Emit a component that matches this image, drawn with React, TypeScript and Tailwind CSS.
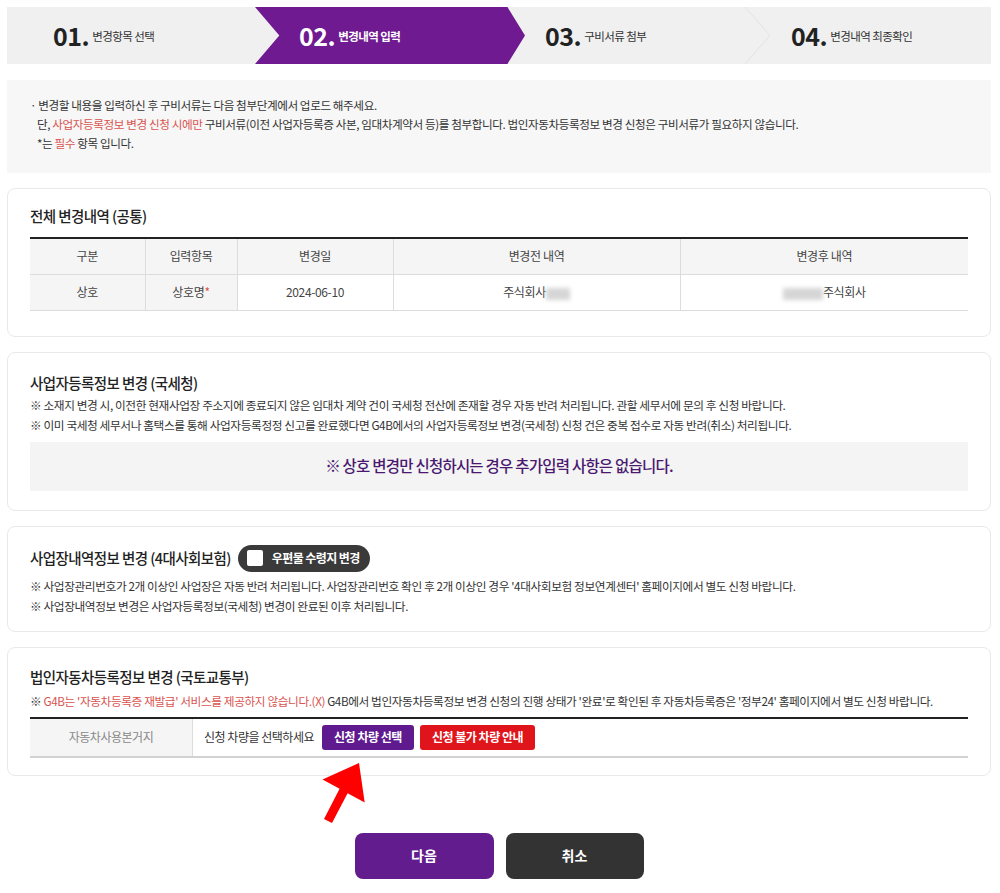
import React from 'react';

const steps = [
  { no: '01.', label: '변경항목 선택' },
  { no: '02.', label: '변경내역 입력' },
  { no: '03.', label: '구비서류 첨부' },
  { no: '04.', label: '변경내역 최종확인' },
];

function Stepper() {
  return (
    <div className="relative flex h-[57px] bg-[#f0f0f0]">
      {/* active chevron */}
      <div className="absolute left-[248px] top-0 h-full w-[270px] bg-[#6f1a91] [clip-path:polygon(0_0,93.5%_0,100%_50%,93.5%_100%,0_100%,9%_50%)]" />
      {/* faint divider between 03 and 04 */}
      <svg className="absolute left-[737px] top-0" width="28" height="57" viewBox="0 0 28 57">
        <polyline points="1,0 26,28.5 1,57" fill="none" stroke="#e2e2e2" strokeWidth="1" />
      </svg>
      {steps.map((s, i) => (
        <div key={s.no} className="relative flex flex-1 items-center pl-[46px]">
          <span className={`text-[25px] font-bold leading-none tracking-[-0.02em] ${i === 1 ? 'text-white' : 'text-[#222]'}`}>{s.no}</span>
          <span className={`ml-[3px] mt-[3px] text-[11.5px] tracking-[-0.05em] ${i === 1 ? 'font-bold text-white' : 'text-[#333]'}`}>{s.label}</span>
        </div>
      ))}
    </div>
  );
}

function Card({ children, className = '' }: { children: React.ReactNode; className?: string }) {
  return <div className={`rounded-lg border border-[#e9e9e9] bg-white px-[22px] ${className}`}>{children}</div>;
}

function Title({ children }: { children: React.ReactNode }) {
  return <div className="text-[14.5px] font-medium leading-[20px] tracking-[-0.04em] text-[#222]">{children}</div>;
}

function Note({ children }: { children: React.ReactNode }) {
  return <p className="text-[11.7px] leading-[20px] tracking-[-0.035em] text-[#333]">{children}</p>;
}

const Blur = ({ w }: { w: string }) => (
  <span className={`inline-block h-[12px] align-middle blur-[2px] bg-[#d6d6d6] ${w}`} />
);

export default function App() {
  const th = 'border-l border-[#dcdcdc] first:border-l-0 bg-[#f5f5f5] font-normal';
  const td = 'border-l border-[#dcdcdc] first:border-l-0';
  return (
    <div className="min-h-[893px] bg-white font-['Noto_Sans_CJK_KR','Noto_Sans',sans-serif] text-[#333]">
      <div className="relative ml-[7px] w-[984px] pt-[7px]">
        <Stepper />

        <div className="mt-[16px] bg-[#f7f7f7] px-[23px] pb-[20px] pt-[16px] text-[11.6px] leading-[19px] tracking-[-0.035em] text-[#333]">
          <p>· 변경할 내용을 입력하신 후 구비서류는 다음 첨부단계에서 업로드 해주세요.</p>
          <p className="pl-[7px]">
            단, <span className="text-[#d9534f]">사업자등록정보 변경 신청 시에만</span> 구비서류(이전 사업자등록증 사본, 임대차계약서 등)를 첨부합니다. 법인자동차등록정보 변경 신청은 구비서류가 필요하지 않습니다.
          </p>
          <p className="pl-[7px]">
            *는 <span className="text-[#d9534f]">필수</span> 항목 입니다.
          </p>
        </div>

        <div className="mt-[15px] flex flex-col gap-[15px]">
          <Card className="pb-[25px] pt-[17px]">
            <Title>전체 변경내역 (공통)</Title>
            <table className="mt-[11px] w-full border-collapse border-t-2 border-[#222] text-center text-[12px] tracking-[-0.03em] text-[#444]">
              <colgroup>
                <col className="w-[115px]" />
                <col className="w-[92px]" />
                <col className="w-[156px]" />
                <col className="w-[287px]" />
                <col />
              </colgroup>
              <thead>
                <tr className="h-[36px] border-b border-[#dcdcdc]">
                  <th className={th}>구분</th>
                  <th className={th}>입력항목</th>
                  <th className={th}>변경일</th>
                  <th className={th}>변경전 내역</th>
                  <th className={th}>변경후 내역</th>
                </tr>
              </thead>
              <tbody>
                <tr className="h-[36px] border-b border-[#dcdcdc]">
                  <td className={`${td} bg-[#f5f5f5]`}>상호</td>
                  <td className={`${td} bg-[#f5f5f5]`}>
                    상호명<span className="text-[#d9534f]">*</span>
                  </td>
                  <td className={td}>2024-06-10</td>
                  <td className={td}>
                    주식회사<Blur w="w-[24px]" />
                  </td>
                  <td className={td}>
                    <Blur w="w-[40px]" />주식회사
                  </td>
                </tr>
              </tbody>
            </table>
          </Card>

          <Card className="pb-[19px] pt-[20px]">
            <Title>사업자등록정보 변경 (국세청)</Title>
            <div className="mt-[2px]">
              <Note>※ 소재지 변경 시, 이전한 현재사업장 주소지에 종료되지 않은 임대차 계약 건이 국세청 전산에 존재할 경우 자동 반려 처리됩니다. 관할 세무서에 문의 후 신청 바랍니다.</Note>
              <Note>※ 이미 국세청 세무서나 홈택스를 통해 사업자등록정정 신고를 완료했다면 G4B에서의 사업자등록정보 변경(국세청) 신청 건은 중복 접수로 자동 반려(취소) 처리됩니다.</Note>
            </div>
            <div className="mt-[7px] flex h-[49px] items-center justify-center bg-[#f4f4f4] text-[15.5px] font-medium tracking-[-0.05em] text-[#4a1870]">
              ※ 상호 변경만 신청하시는 경우 추가입력 사항은 없습니다.
            </div>
          </Card>

          <Card className="pb-[15px] pt-[18px]">
            <div className="flex items-center gap-[7px]">
              <Title>사업장내역정보 변경 (4대사회보험)</Title>
              <button className="flex h-[27px] items-center gap-[9px] rounded-full bg-[#3a3a3a] pl-[9px] pr-[10px] text-[12px] font-bold tracking-[-0.05em] text-white">
                <span className="h-[16px] w-[16px] rounded-[2px] bg-white" />
                우편물 수령지 변경
              </button>
            </div>
            <div className="mt-[4px]">
              <Note>※ 사업장관리번호가 2개 이상인 사업장은 자동 반려 처리됩니다. 사업장관리번호 확인 후 2개 이상인 경우 '4대사회보험 정보연계센터' 홈페이지에서 별도 신청 바랍니다.</Note>
              <Note>※ 사업장내역정보 변경은 사업자등록정보(국세청) 변경이 완료된 이후 처리됩니다.</Note>
            </div>
          </Card>

          <Card className="pb-[17px] pt-[19px]">
            <Title>법인자동차등록정보 변경 (국토교통부)</Title>
            <div className="mt-[4px]">
              <Note>
                ※ <span className="text-[#d9534f]">G4B는 '자동차등록증 재발급' 서비스를 제공하지 않습니다.(X)</span> G4B에서 법인자동차등록정보 변경 신청의 진행 상태가 '완료'로 확인된 후 자동차등록증은 '정부24' 홈페이지에서 별도 신청 바랍니다.
              </Note>
            </div>
            <div className="mt-[6px] flex h-[41px] border-b-2 border-t-2 border-b-[#d2d2d2] border-t-[#222] text-[12px] tracking-[-0.04em]">
              <div className="flex w-[163px] items-center justify-center border-r border-[#dcdcdc] bg-[#f5f5f5] text-[#888]">자동차사용본거지</div>
              <div className="flex items-center pl-[11px] text-[#333]">
                신청 차량을 선택하세요
                <button className="ml-[8px] h-[25px] rounded-[3px] bg-[#5e1a8e] px-[12px] font-bold text-white">신청 차량 선택</button>
                <button className="ml-[6px] h-[25px] rounded-[3px] bg-[#e0141b] px-[12px] font-bold text-white">신청 불가 차량 안내</button>
              </div>
            </div>
          </Card>
        </div>

        <div className="mt-[57px] flex justify-center gap-[12px]">
          <button className="h-[46px] w-[139px] rounded-lg bg-[#621c8e] text-[14px] font-bold text-white">다음</button>
          <button className="h-[46px] w-[138px] rounded-lg bg-[#333] text-[14px] font-bold text-white">취소</button>
        </div>

        {/* red annotation arrow */}
        <svg className="absolute left-[297px] top-[751px]" width="70" height="80" viewBox="0 0 70 80">
          <polygon points="55,12 60.7,51.5 43.6,42.2 28,72 20,68 35.6,37.8 18.5,28.5" fill="#f00" />
        </svg>
      </div>
    </div>
  );
}
